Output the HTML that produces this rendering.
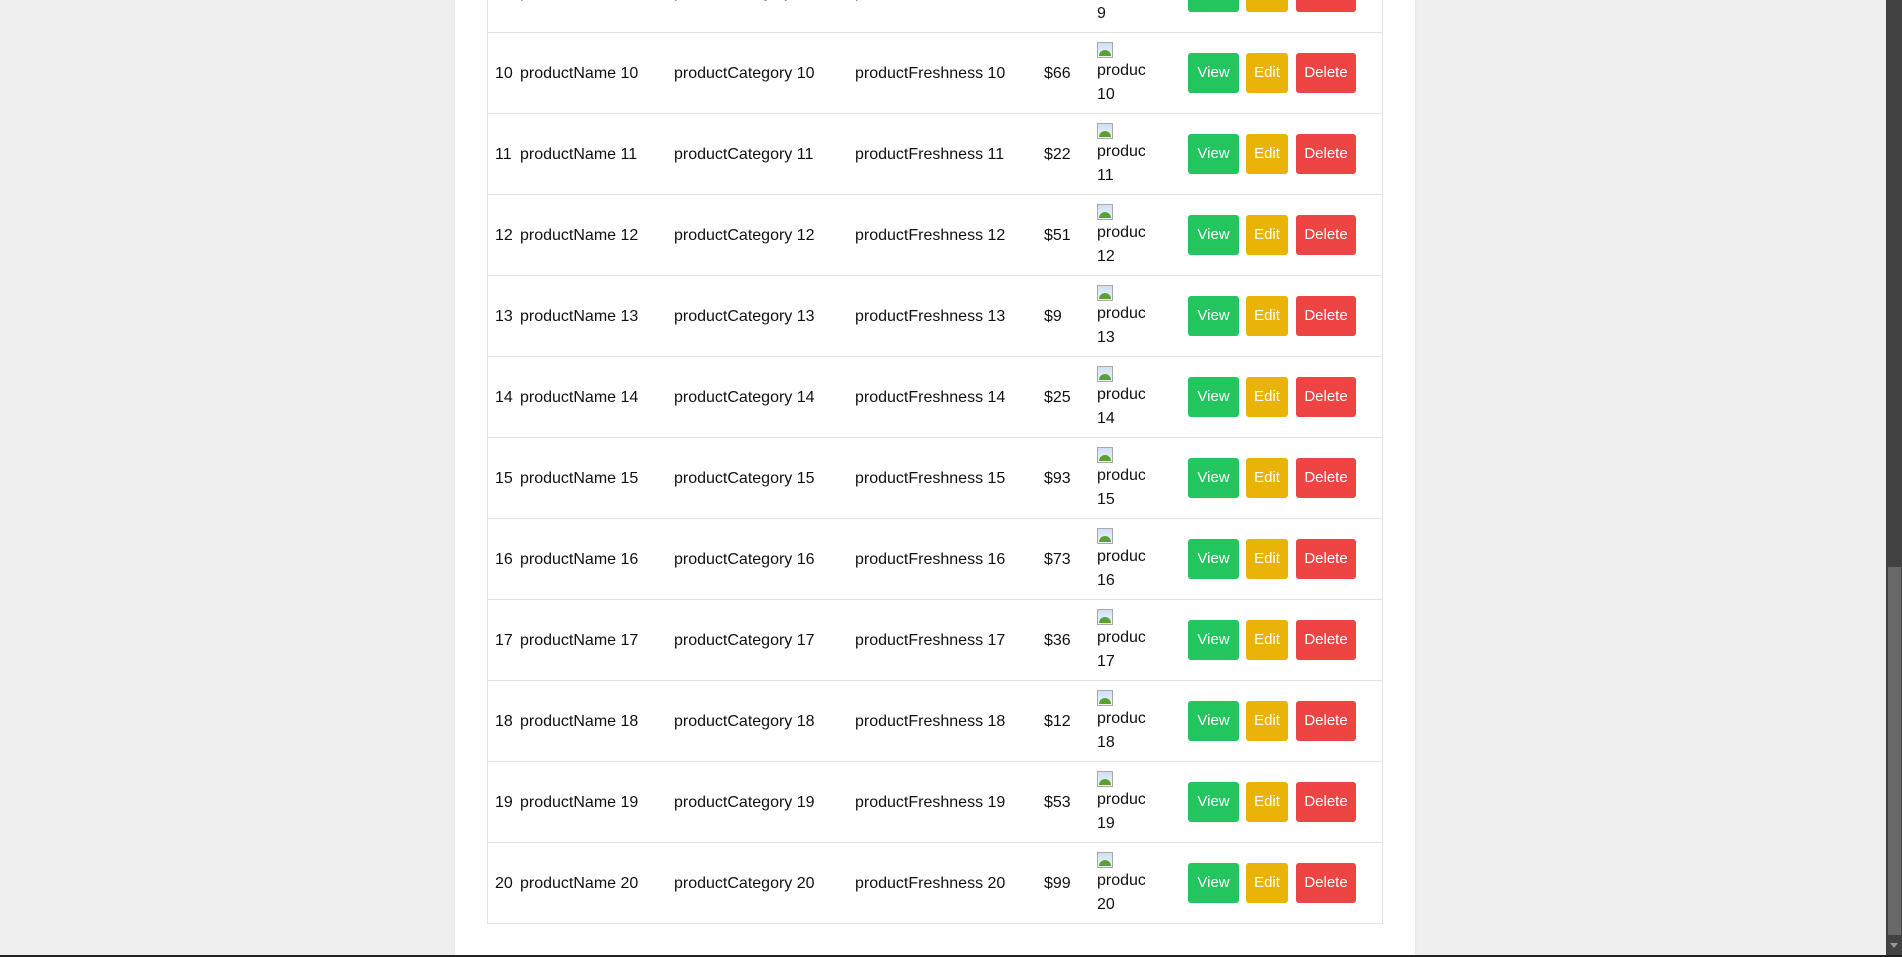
<!DOCTYPE html>
<html><head><meta charset="utf-8"><style>
*{box-sizing:border-box;margin:0;padding:0}
html,body{width:1902px;height:957px;overflow:hidden;background:#efefef;font-family:"Liberation Sans",sans-serif;font-size:16px;color:#111}
.card{position:absolute;left:455px;top:0;width:960px;height:955px;background:#fff;box-shadow:0 0 3px rgba(0,0,0,.08)}
.tbl{position:absolute;left:487px;top:-48px;width:896px;border-left:1px solid #e3e3e3;border-right:1px solid #e3e3e3}
.row{position:relative;height:81px;border-bottom:1px solid #e3e3e3}
.c{position:absolute;top:1px;height:80px;line-height:80px;white-space:nowrap}
.img{position:absolute;left:609px;top:9px;width:48px;overflow:hidden;line-height:24px;white-space:nowrap}
.ic{display:block;width:16px;height:16px;margin:0 0 1px;position:relative;background:linear-gradient(#cfe0f3,#eef4fb);border:1px solid #aaa}
.ic:after{content:"";position:absolute;left:1px;right:1px;bottom:1px;height:6px;background:#5aa032;border-radius:8px 8px 0 0}
.b{position:absolute;top:20px;height:40px;line-height:40px;color:#fff;text-align:center;border-radius:3px;font-size:15px}
.v{left:700px;width:51px;background:#22c55e}
.e{left:758px;width:42px;background:#eab308}
.d{left:808px;width:60px;background:#ef4444}
.sb{position:absolute;left:1886px;top:0;width:16px;height:955px;background:#424242}
.th{position:absolute;left:1888px;top:567px;width:13px;height:368px;background:#686868}
.ar{position:absolute;left:1890px;top:943px;width:0;height:0;border-left:4px solid transparent;border-right:4px solid transparent;border-top:5px solid #999}
.bot{position:absolute;left:0;top:955px;width:1902px;height:2px;background:#222}
</style></head><body>
<div class="card"></div>
<div class="tbl">
<div class="row"><span class="c" style="left:7px">9</span><span class="c" style="left:32px">productName 9</span><span class="c" style="left:186px">productCategory 9</span><span class="c" style="left:367px">productFreshness 9</span><span class="c" style="left:556px">$40</span><div class="img"><span class="ic"></span>produc<br>9</div><span class="b v">View</span><span class="b e">Edit</span><span class="b d">Delete</span></div>
<div class="row"><span class="c" style="left:7px">10</span><span class="c" style="left:32px">productName 10</span><span class="c" style="left:186px">productCategory 10</span><span class="c" style="left:367px">productFreshness 10</span><span class="c" style="left:556px">$66</span><div class="img"><span class="ic"></span>produc<br>10</div><span class="b v">View</span><span class="b e">Edit</span><span class="b d">Delete</span></div>
<div class="row"><span class="c" style="left:7px">11</span><span class="c" style="left:32px">productName 11</span><span class="c" style="left:186px">productCategory 11</span><span class="c" style="left:367px">productFreshness 11</span><span class="c" style="left:556px">$22</span><div class="img"><span class="ic"></span>produc<br>11</div><span class="b v">View</span><span class="b e">Edit</span><span class="b d">Delete</span></div>
<div class="row"><span class="c" style="left:7px">12</span><span class="c" style="left:32px">productName 12</span><span class="c" style="left:186px">productCategory 12</span><span class="c" style="left:367px">productFreshness 12</span><span class="c" style="left:556px">$51</span><div class="img"><span class="ic"></span>produc<br>12</div><span class="b v">View</span><span class="b e">Edit</span><span class="b d">Delete</span></div>
<div class="row"><span class="c" style="left:7px">13</span><span class="c" style="left:32px">productName 13</span><span class="c" style="left:186px">productCategory 13</span><span class="c" style="left:367px">productFreshness 13</span><span class="c" style="left:556px">$9</span><div class="img"><span class="ic"></span>produc<br>13</div><span class="b v">View</span><span class="b e">Edit</span><span class="b d">Delete</span></div>
<div class="row"><span class="c" style="left:7px">14</span><span class="c" style="left:32px">productName 14</span><span class="c" style="left:186px">productCategory 14</span><span class="c" style="left:367px">productFreshness 14</span><span class="c" style="left:556px">$25</span><div class="img"><span class="ic"></span>produc<br>14</div><span class="b v">View</span><span class="b e">Edit</span><span class="b d">Delete</span></div>
<div class="row"><span class="c" style="left:7px">15</span><span class="c" style="left:32px">productName 15</span><span class="c" style="left:186px">productCategory 15</span><span class="c" style="left:367px">productFreshness 15</span><span class="c" style="left:556px">$93</span><div class="img"><span class="ic"></span>produc<br>15</div><span class="b v">View</span><span class="b e">Edit</span><span class="b d">Delete</span></div>
<div class="row"><span class="c" style="left:7px">16</span><span class="c" style="left:32px">productName 16</span><span class="c" style="left:186px">productCategory 16</span><span class="c" style="left:367px">productFreshness 16</span><span class="c" style="left:556px">$73</span><div class="img"><span class="ic"></span>produc<br>16</div><span class="b v">View</span><span class="b e">Edit</span><span class="b d">Delete</span></div>
<div class="row"><span class="c" style="left:7px">17</span><span class="c" style="left:32px">productName 17</span><span class="c" style="left:186px">productCategory 17</span><span class="c" style="left:367px">productFreshness 17</span><span class="c" style="left:556px">$36</span><div class="img"><span class="ic"></span>produc<br>17</div><span class="b v">View</span><span class="b e">Edit</span><span class="b d">Delete</span></div>
<div class="row"><span class="c" style="left:7px">18</span><span class="c" style="left:32px">productName 18</span><span class="c" style="left:186px">productCategory 18</span><span class="c" style="left:367px">productFreshness 18</span><span class="c" style="left:556px">$12</span><div class="img"><span class="ic"></span>produc<br>18</div><span class="b v">View</span><span class="b e">Edit</span><span class="b d">Delete</span></div>
<div class="row"><span class="c" style="left:7px">19</span><span class="c" style="left:32px">productName 19</span><span class="c" style="left:186px">productCategory 19</span><span class="c" style="left:367px">productFreshness 19</span><span class="c" style="left:556px">$53</span><div class="img"><span class="ic"></span>produc<br>19</div><span class="b v">View</span><span class="b e">Edit</span><span class="b d">Delete</span></div>
<div class="row"><span class="c" style="left:7px">20</span><span class="c" style="left:32px">productName 20</span><span class="c" style="left:186px">productCategory 20</span><span class="c" style="left:367px">productFreshness 20</span><span class="c" style="left:556px">$99</span><div class="img"><span class="ic"></span>produc<br>20</div><span class="b v">View</span><span class="b e">Edit</span><span class="b d">Delete</span></div>
</div>
<div class="sb"></div><div class="th"></div><div class="ar"></div>
<div class="bot"></div>
</body></html>
